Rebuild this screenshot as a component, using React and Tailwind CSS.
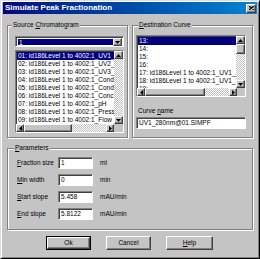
import React from 'react'

const raised =
  'border border-t-white border-l-white border-r-[#404040] border-b-[#404040] shadow-[inset_-1px_-1px_0_#808080] bg-[#c4c4c4]'
const sunken =
  'border border-t-[#808080] border-l-[#808080] border-r-white border-b-white shadow-[inset_1px_1px_0_#404040]'
const dither =
  'bg-[image:repeating-conic-gradient(#ffffff_0_25%,#c0c0c0_0_50%)] bg-[length:2px_2px]'

function Tri({ dir }) {
  const pts = {
    up: '0,3 2.5,0 5,3',
    down: '0,0 5,0 2.5,3',
    left: '3,0 3,5 0,2.5',
    right: '0,0 3,2.5 0,5',
  }[dir]
  const vert = dir === 'up' || dir === 'down'
  return (
    <svg width={vert ? 5 : 3} height={vert ? 3 : 5} viewBox={vert ? '0 0 5 3' : '0 0 3 5'}>
      <polygon points={pts} fill="#000" />
    </svg>
  )
}

function ArrowBtn({ dir, className = 'w-[9px] h-[8px]' }) {
  return (
    <div className={`${raised} ${className} flex items-center justify-center shrink-0`}>
      <Tri dir={dir} />
    </div>
  )
}

function U({ children }) {
  return <span className="underline underline-offset-[1px]">{children}</span>
}

function ListBox({ items, selected, width, height, vthumb, hthumb, htrack }) {
  return (
    <div className={`${sunken} bg-white flex flex-col`} style={{ width, height }}>
      <div className="flex flex-1 min-h-0">
        <div className="flex-1 min-w-0 overflow-hidden pt-[1px] pl-[1px]">
          {items.map((t, i) => (
            <div
              key={i}
              className={`h-[8px] leading-[8px] whitespace-nowrap overflow-hidden pl-[1px] ${
                i === selected ? 'bg-[#000080] text-white' : 'text-black'
              }`}
            >
              {t}
            </div>
          ))}
        </div>
        <div className="w-[9px] flex flex-col shrink-0">
          <ArrowBtn dir="up" />
          {vthumb ? <div className={`${raised} h-[10px] shrink-0`} /> : null}
          <div className={`flex-1 ${dither}`} />
          <ArrowBtn dir="down" />
        </div>
      </div>
      <div className="flex h-[8px] shrink-0">
        <ArrowBtn dir="left" className="w-[8px] h-[8px]" />
        <div className={`${raised} h-[8px] shrink-0`} style={{ width: hthumb }} />
        <div className={`${dither} h-[8px]`} style={{ width: htrack }} />
        <ArrowBtn dir="right" className="w-[8px] h-[8px]" />
        <div className="flex-1 bg-[#c4c4c4]" />
      </div>
    </div>
  )
}

const sourceItems = [
  '01: id186Level 1 to 4002:1_UV1_280nm',
  '02: id186Level 1 to 4002:1_UV2_254nm',
  '03: id186Level 1 to 4002:1_UV3_215nm',
  '04: id186Level 1 to 4002:1_Cond',
  '05: id186Level 1 to 4002:1_Cond%',
  '06: id186Level 1 to 4002:1_Conc',
  '07: id186Level 1 to 4002:1_pH',
  '08: id186Level 1 to 4002:1_Pressure',
  '09: id186Level 1 to 4002:1_Flow',
]

const destItems = [
  '13:',
  '14:',
  '15:',
  '16:',
  '17: id186Level 1 to 4002:1_UV1_280nm',
  '18: id186Level 1 to 4002:1_UV1_280nm',
  '19:',
]

const params = [
  { label: <><U>F</U>raction size</>, value: '1', unit: 'ml' },
  { label: <><U>M</U>in width</>, value: '0', unit: 'min' },
  { label: <><U>S</U>tart slope</>, value: '5.458', unit: 'mAU/min' },
  { label: <><U>E</U>nd slope</>, value: '5.8122', unit: 'mAU/min' },
]

export default function App() {
  return (
    <div className="w-[260px] h-[259px] bg-[#c4c4c4] border border-t-[#dfdfdf] border-l-[#dfdfdf] border-r-black border-b-black shadow-[inset_1px_1px_0_white,inset_-1px_-1px_0_#808080] p-[1px] font-['Liberation_Sans',Arial,sans-serif] text-[6.5px] leading-[8px] text-black overflow-hidden">
      {/* title bar */}
      <div className="h-[12px] mx-[1px] bg-gradient-to-r from-[#000080] to-[#1084d0] flex items-center justify-between pl-[2px] pr-[1px]">
        <span className="text-white font-bold text-[8px] leading-[12px] whitespace-nowrap">
          Simulate Peak Fractionation
        </span>
        <div className={`${raised} w-[10px] h-[9px] flex items-center justify-center`}>
          <svg width="5" height="4" viewBox="0 0 5 4">
            <path d="M0 0 L5 4 M5 0 L0 4" stroke="#000" strokeWidth="1.2" />
          </svg>
        </div>
      </div>

      <div className="px-[5px]">
        {/* top groups */}
        <div className="flex gap-[4px] mt-[7px]">
          <fieldset className="w-[121px] border border-[#808080] shadow-[inset_1px_1px_0_white,1px_1px_0_white]">
            <legend className="ml-[4px] px-[1px] bg-[#c4c4c4] leading-[8px]">
              Source <U>C</U>hromatogram
            </legend>
            <div className="pl-[7px] pt-[7px] pb-[4px] flex flex-col gap-[3px]">
              <div className={`${sunken} bg-white w-[109px] h-[11px] flex p-[1px]`}>
                <div className="flex-1 bg-[#000080] text-white pl-[1px] leading-[7px] ml-[1px] mt-[1px]">1</div>
                <ArrowBtn dir="down" className="w-[9px] h-[8px]" />
              </div>
              <ListBox
                items={sourceItems}
                selected={0}
                width={109}
                height={83}
                hthumb={48}
                htrack={34}
              />
            </div>
          </fieldset>

          <fieldset className="w-[121px] border border-[#808080] shadow-[inset_1px_1px_0_white,1px_1px_0_white]">
            <legend className="ml-[5px] px-[1px] bg-[#c4c4c4] leading-[8px]">
              <U>D</U>estination Curve
            </legend>
            <div className="pl-[3px] pt-[6px] flex flex-col">
              <ListBox
                items={destItems}
                selected={0}
                width={110}
                height={62}
                vthumb
                hthumb={60}
                htrack={24}
              />
              <div className="mt-[10px] pl-[2px] h-[8px]">
                Curve <U>n</U>ame
              </div>
              <div className={`${sunken} bg-white w-[110px] h-[12px] mt-[2px] pl-[2px] leading-[10px] whitespace-nowrap`}>
                UV1_280nm@01.SIMPF
              </div>
            </div>
          </fieldset>
        </div>

        {/* parameters */}
        <fieldset className="mt-[6px] border border-[#808080] shadow-[inset_1px_1px_0_white,1px_1px_0_white]">
          <legend className="ml-[6px] px-[1px] bg-[#c4c4c4] leading-[8px]">
            <U>P</U>arameters
          </legend>
          <div className="pl-[9px] pt-[5px] pb-[9px] flex flex-col gap-[5px]">
            {params.map((p, i) => (
              <div key={i} className="flex items-center h-[12px]">
                <div className="w-[41px] whitespace-nowrap">{p.label}</div>
                <div className={`${sunken} bg-white w-[35px] h-[12px] pl-[2px] leading-[10px]`}>
                  {p.value}
                </div>
                <div className="ml-[7px]">{p.unit}</div>
              </div>
            ))}
          </div>
        </fieldset>

        {/* buttons */}
        <div className="flex justify-center gap-[15px] mt-[6px] pr-[1px]">
          <div className="w-[45px] h-[14px] border border-black">
            <div className={`${raised} w-full h-full flex items-center justify-center`}>Ok</div>
          </div>
          <div className={`${raised} w-[45px] h-[14px] flex items-center justify-center`}>Cancel</div>
          <div className={`${raised} w-[47px] h-[14px] flex items-center justify-center`}>
            <span>
              <U>H</U>elp
            </span>
          </div>
        </div>
      </div>
    </div>
  )
}
